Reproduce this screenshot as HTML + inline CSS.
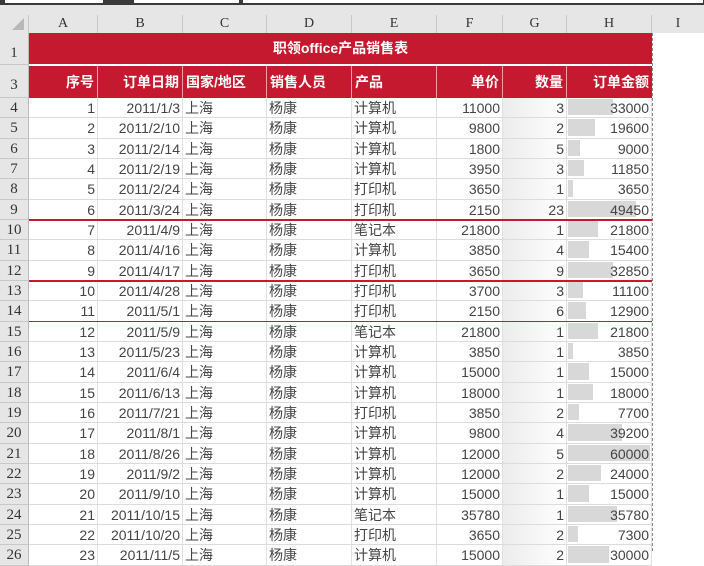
<!DOCTYPE html><html><head><meta charset="utf-8"><style>
*{margin:0;padding:0;box-sizing:border-box}
body{width:704px;height:551px;overflow:hidden;background:#fff;font-family:"Liberation Sans","Noto Sans CJK SC",sans-serif;position:relative}
.top{position:absolute;left:0;top:0;width:704px;height:33px;background:#e6e6e6}
.bar{position:absolute;top:0;height:5px;background:#3a3a3a;width:704px}
.box{position:absolute;top:0;height:3px;background:#fff}
.ch{position:absolute;top:15px;height:18px;font:14px "Liberation Serif",serif;color:#333;text-align:center;line-height:18px;border-right:1px solid #c8c8c8}
.rh{position:absolute;left:0;width:29px;background:#e6e6e6;border-bottom:1px solid #c8c8c8;border-right:1px solid #bbb;font:15px "Liberation Serif",serif;color:#333;text-align:center}
.red{position:absolute;left:29px;width:623px;background:#c4192e;color:#fff;font-weight:bold;font-size:14px}
.row{position:absolute;left:29px;height:20.33px;width:623px;display:flex;border-bottom:1px solid #dcdcdc;font-size:14px;color:#444;line-height:20px}
.row div{border-right:1px solid #e0e0e0;padding:0 2px;white-space:nowrap;position:relative;overflow:hidden}
.r{text-align:right}
.a{width:69px}.b{width:85px}.c{width:84px}.d{width:85px}.e{width:85px}.f{width:66px}.g{width:64px;background:linear-gradient(90deg,#ececec,#fff)}.h{width:85px}
.h i{position:absolute;left:1px;top:1px;bottom:2px;background:#d8d8d8}
.h span{position:relative}
.hr div{border-right:1px solid #f0a0a8;padding:0 3px;line-height:32px}
.rl{position:absolute;left:29px;width:623px;height:1.5px;background:#c4192e;z-index:5}
</style></head><body>
<div class="top"><div class="bar"></div><div class="box" style="left:5px;width:98px"></div><div class="box" style="left:134px;width:105px"></div><div class="box" style="left:243px;width:460px"></div>
<div style="position:absolute;left:0;top:15px;width:29px;height:18px;border-right:1px solid #c8c8c8"><div style="position:absolute;right:4px;bottom:3px;width:0;height:0;border-left:12px solid transparent;border-bottom:12px solid #b8b8b8"></div></div>
<div class="ch" style="left:29px;width:69px">A</div><div class="ch" style="left:98px;width:85px">B</div><div class="ch" style="left:183px;width:84px">C</div><div class="ch" style="left:267px;width:85px">D</div><div class="ch" style="left:352px;width:85px">E</div><div class="ch" style="left:437px;width:66px">F</div><div class="ch" style="left:503px;width:64px">G</div><div class="ch" style="left:567px;width:85px">H</div><div class="ch" style="left:652px;width:52px;border:0">I</div>
</div>
<div class="rh" style="top:33px;height:32px;line-height:40px">1</div>
<div class="rh" style="top:65px;height:33px;line-height:40px">3</div>
<div class="red" style="top:33px;height:31px;text-align:center;line-height:31px">职领office产品销售表</div>
<div class="red hr" style="top:66px;height:32px;display:flex">
<div class="a r">序号</div><div class="b r">订单日期</div><div class="c">国家/地区</div><div class="d">销售人员</div><div class="e">产品</div><div class="f r">单价</div><div class="g r" style="background:none">数量</div><div class="h r" style="border:0">订单金额</div></div>
<div style="position:absolute;left:652px;top:33px;height:518px;border-left:1px dashed #888;z-index:6"></div>

<div class="rh" style="top:98px;height:20.33px;line-height:20px">4</div>
<div class="row" style="top:98px"><div class="a r">1</div><div class="b r">2011/1/3</div><div class="c">上海</div><div class="d">杨康</div><div class="e">计算机</div><div class="f r">11000</div><div class="g r">3</div><div class="h r"><i style="width:45px"></i><span>33000</span></div></div>
<div class="rh" style="top:118.33px;height:20.33px;line-height:20px">5</div>
<div class="row" style="top:118.33px"><div class="a r">2</div><div class="b r">2011/2/10</div><div class="c">上海</div><div class="d">杨康</div><div class="e">计算机</div><div class="f r">9800</div><div class="g r">2</div><div class="h r"><i style="width:27px"></i><span>19600</span></div></div>
<div class="rh" style="top:138.67px;height:20.33px;line-height:20px">6</div>
<div class="row" style="top:138.67px"><div class="a r">3</div><div class="b r">2011/2/14</div><div class="c">上海</div><div class="d">杨康</div><div class="e">计算机</div><div class="f r">1800</div><div class="g r">5</div><div class="h r"><i style="width:12px"></i><span>9000</span></div></div>
<div class="rh" style="top:159px;height:20.33px;line-height:20px">7</div>
<div class="row" style="top:159px"><div class="a r">4</div><div class="b r">2011/2/19</div><div class="c">上海</div><div class="d">杨康</div><div class="e">计算机</div><div class="f r">3950</div><div class="g r">3</div><div class="h r"><i style="width:16px"></i><span>11850</span></div></div>
<div class="rh" style="top:179.33px;height:20.33px;line-height:20px">8</div>
<div class="row" style="top:179.33px"><div class="a r">5</div><div class="b r">2011/2/24</div><div class="c">上海</div><div class="d">杨康</div><div class="e">打印机</div><div class="f r">3650</div><div class="g r">1</div><div class="h r"><i style="width:5px"></i><span>3650</span></div></div>
<div class="rh" style="top:199.67px;height:20.33px;line-height:20px">9</div>
<div class="row" style="top:199.67px"><div class="a r">6</div><div class="b r">2011/3/24</div><div class="c">上海</div><div class="d">杨康</div><div class="e">打印机</div><div class="f r">2150</div><div class="g r">23</div><div class="h r"><i style="width:68px"></i><span>49450</span></div></div>
<div class="rh" style="top:220px;height:20.33px;line-height:20px">10</div>
<div class="row" style="top:220px"><div class="a r">7</div><div class="b r">2011/4/9</div><div class="c">上海</div><div class="d">杨康</div><div class="e">笔记本</div><div class="f r">21800</div><div class="g r">1</div><div class="h r"><i style="width:30px"></i><span>21800</span></div></div>
<div class="rh" style="top:240.33px;height:20.33px;line-height:20px">11</div>
<div class="row" style="top:240.33px"><div class="a r">8</div><div class="b r">2011/4/16</div><div class="c">上海</div><div class="d">杨康</div><div class="e">计算机</div><div class="f r">3850</div><div class="g r">4</div><div class="h r"><i style="width:21px"></i><span>15400</span></div></div>
<div class="rh" style="top:260.67px;height:20.33px;line-height:20px">12</div>
<div class="row" style="top:260.67px"><div class="a r">9</div><div class="b r">2011/4/17</div><div class="c">上海</div><div class="d">杨康</div><div class="e">打印机</div><div class="f r">3650</div><div class="g r">9</div><div class="h r"><i style="width:45px"></i><span>32850</span></div></div>
<div class="rh" style="top:281px;height:20.33px;line-height:20px">13</div>
<div class="row" style="top:281px"><div class="a r">10</div><div class="b r">2011/4/28</div><div class="c">上海</div><div class="d">杨康</div><div class="e">打印机</div><div class="f r">3700</div><div class="g r">3</div><div class="h r"><i style="width:15px"></i><span>11100</span></div></div>
<div class="rh" style="top:301.33px;height:20.33px;line-height:20px">14</div>
<div class="row" style="top:301.33px"><div class="a r">11</div><div class="b r">2011/5/1</div><div class="c">上海</div><div class="d">杨康</div><div class="e">打印机</div><div class="f r">2150</div><div class="g r">6</div><div class="h r"><i style="width:18px"></i><span>12900</span></div></div>
<div class="rh" style="top:321.67px;height:20.33px;line-height:20px">15</div>
<div class="row" style="top:321.67px"><div class="a r">12</div><div class="b r">2011/5/9</div><div class="c">上海</div><div class="d">杨康</div><div class="e">笔记本</div><div class="f r">21800</div><div class="g r">1</div><div class="h r"><i style="width:30px"></i><span>21800</span></div></div>
<div class="rh" style="top:342px;height:20.33px;line-height:20px">16</div>
<div class="row" style="top:342px"><div class="a r">13</div><div class="b r">2011/5/23</div><div class="c">上海</div><div class="d">杨康</div><div class="e">计算机</div><div class="f r">3850</div><div class="g r">1</div><div class="h r"><i style="width:5px"></i><span>3850</span></div></div>
<div class="rh" style="top:362.33px;height:20.33px;line-height:20px">17</div>
<div class="row" style="top:362.33px"><div class="a r">14</div><div class="b r">2011/6/4</div><div class="c">上海</div><div class="d">杨康</div><div class="e">计算机</div><div class="f r">15000</div><div class="g r">1</div><div class="h r"><i style="width:21px"></i><span>15000</span></div></div>
<div class="rh" style="top:382.67px;height:20.33px;line-height:20px">18</div>
<div class="row" style="top:382.67px"><div class="a r">15</div><div class="b r">2011/6/13</div><div class="c">上海</div><div class="d">杨康</div><div class="e">计算机</div><div class="f r">18000</div><div class="g r">1</div><div class="h r"><i style="width:25px"></i><span>18000</span></div></div>
<div class="rh" style="top:403px;height:20.33px;line-height:20px">19</div>
<div class="row" style="top:403px"><div class="a r">16</div><div class="b r">2011/7/21</div><div class="c">上海</div><div class="d">杨康</div><div class="e">打印机</div><div class="f r">3850</div><div class="g r">2</div><div class="h r"><i style="width:11px"></i><span>7700</span></div></div>
<div class="rh" style="top:423.33px;height:20.33px;line-height:20px">20</div>
<div class="row" style="top:423.33px"><div class="a r">17</div><div class="b r">2011/8/1</div><div class="c">上海</div><div class="d">杨康</div><div class="e">计算机</div><div class="f r">9800</div><div class="g r">4</div><div class="h r"><i style="width:54px"></i><span>39200</span></div></div>
<div class="rh" style="top:443.67px;height:20.33px;line-height:20px">21</div>
<div class="row" style="top:443.67px"><div class="a r">18</div><div class="b r">2011/8/26</div><div class="c">上海</div><div class="d">杨康</div><div class="e">计算机</div><div class="f r">12000</div><div class="g r">5</div><div class="h r"><i style="width:82px"></i><span>60000</span></div></div>
<div class="rh" style="top:464px;height:20.33px;line-height:20px">22</div>
<div class="row" style="top:464px"><div class="a r">19</div><div class="b r">2011/9/2</div><div class="c">上海</div><div class="d">杨康</div><div class="e">计算机</div><div class="f r">12000</div><div class="g r">2</div><div class="h r"><i style="width:33px"></i><span>24000</span></div></div>
<div class="rh" style="top:484.33px;height:20.33px;line-height:20px">23</div>
<div class="row" style="top:484.33px"><div class="a r">20</div><div class="b r">2011/9/10</div><div class="c">上海</div><div class="d">杨康</div><div class="e">计算机</div><div class="f r">15000</div><div class="g r">1</div><div class="h r"><i style="width:21px"></i><span>15000</span></div></div>
<div class="rh" style="top:504.67px;height:20.33px;line-height:20px">24</div>
<div class="row" style="top:504.67px"><div class="a r">21</div><div class="b r">2011/10/15</div><div class="c">上海</div><div class="d">杨康</div><div class="e">笔记本</div><div class="f r">35780</div><div class="g r">1</div><div class="h r"><i style="width:49px"></i><span>35780</span></div></div>
<div class="rh" style="top:525px;height:20.33px;line-height:20px">25</div>
<div class="row" style="top:525px"><div class="a r">22</div><div class="b r">2011/10/20</div><div class="c">上海</div><div class="d">杨康</div><div class="e">打印机</div><div class="f r">3650</div><div class="g r">2</div><div class="h r"><i style="width:10px"></i><span>7300</span></div></div>
<div class="rh" style="top:545.33px;height:20.33px;line-height:20px">26</div>
<div class="row" style="top:545.33px"><div class="a r">23</div><div class="b r">2011/11/5</div><div class="c">上海</div><div class="d">杨康</div><div class="e">计算机</div><div class="f r">15000</div><div class="g r">2</div><div class="h r"><i style="width:41px"></i><span>30000</span></div></div>
<div class="rl" style="top:219px"></div>
<div class="rl" style="top:280px"></div>
<div class="rl" style="top:320.5px"></div>
</body></html>
